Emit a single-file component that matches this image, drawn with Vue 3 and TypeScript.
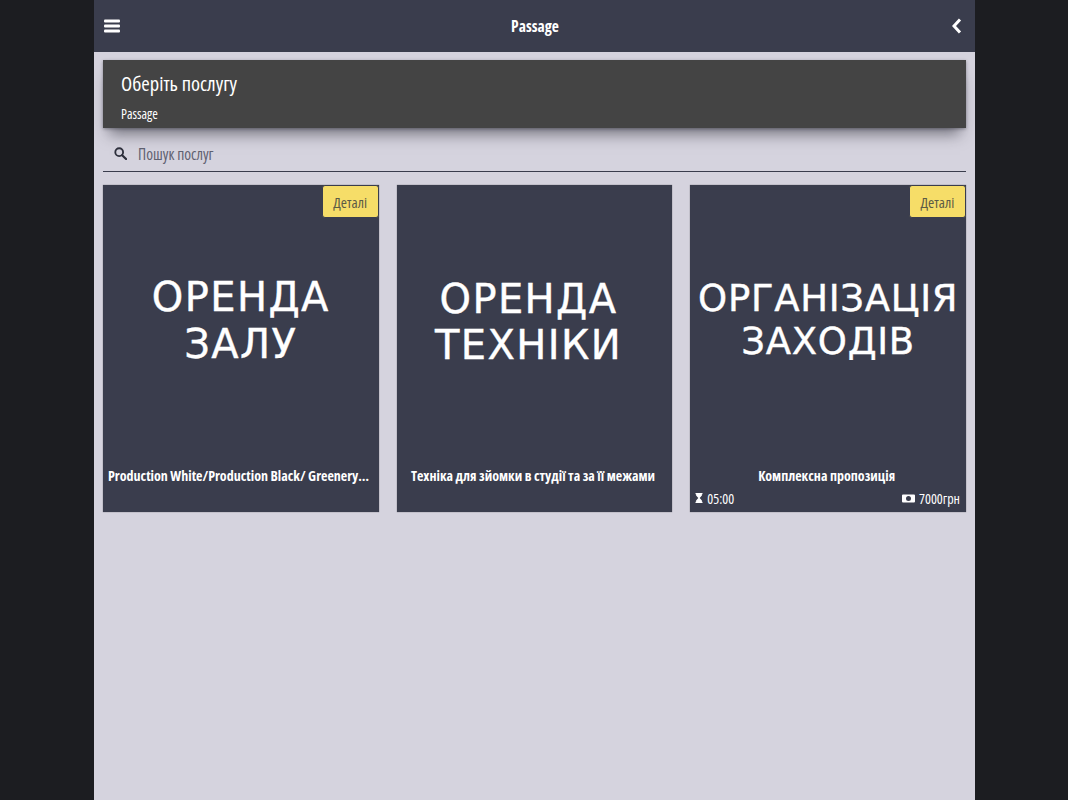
<script setup lang="ts">
interface Service {
  lines: string[]
  title: string
  cover: string
  details: boolean
  duration?: string
  price?: string
}

const services: Service[] = [
  { lines: ["ОРЕНДА", "ЗАЛУ"], title: "Production White/Production Black/ Greenery Studio", cover: "hall", details: true },
  { lines: ["ОРЕНДА", "ТЕХНІКИ"], title: "Техніка для зйомки в студії та за її межами", cover: "tech", details: false },
  { lines: ["ОРГАНІЗАЦІЯ", "ЗАХОДІВ"], title: "Комплексна пропозиція", cover: "events", details: true, duration: "05:00", price: "7000грн" },
]
</script>

<template>
  <div class="page">
    <div class="shell">
      <header class="topbar">
        <svg class="menu" viewBox="0 0 16 14" width="16" height="14">
          <rect x="0" y="0.5" width="16" height="3" rx="1" />
          <rect x="0" y="5.5" width="16" height="3" rx="1" />
          <rect x="0" y="10.5" width="16" height="3" rx="1" />
        </svg>
        <span class="brand">Passage</span>
        <svg class="back" viewBox="0 0 10 16" width="10" height="16">
          <path d="M8 1.5 2 8l6 6.5" fill="none" stroke="#fff" stroke-width="3" />
        </svg>
      </header>

      <main class="content">
        <section class="banner">
          <h1>Оберіть послугу</h1>
          <p>Passage</p>
        </section>

        <div class="search">
          <svg viewBox="0 0 14 14" width="13" height="13">
            <circle cx="5.6" cy="5.6" r="4.2" fill="none" stroke="#2d2f3c" stroke-width="2" />
            <path d="M8.8 8.8 13 13" stroke="#2d2f3c" stroke-width="2.4" stroke-linecap="round" />
          </svg>
          <span>Пошук послуг</span>
        </div>

        <div class="grid">
          <article v-for="item in services" :key="item.title" class="card">
            <button v-if="item.details" class="details">Деталі</button>
            <div class="cover" :class="item.cover">
              <span v-for="line in item.lines" :key="line">{{ line }}</span>
            </div>
            <div class="title">{{ item.title }}</div>
            <div class="meta">
              <span v-if="item.duration" class="meta-item">
                <svg viewBox="0 0 8 10" width="8" height="10">
                  <path d="M0.5 0h7v1.2h-.6v1.3L4.7 5l2.2 2.5v1.3h.6V10h-7V8.8h.6V7.5L3.3 5 1.1 2.5V1.2h-.6z" fill="#fff" />
                </svg>
                {{ item.duration }}
              </span>
              <span v-if="item.price" class="meta-item">
                <svg viewBox="0 0 13 9" width="13" height="9">
                  <path fill-rule="evenodd" d="M1 .5h11a1 1 0 0 1 1 1v6a1 1 0 0 1-1 1H1a1 1 0 0 1-1-1v-6a1 1 0 0 1 1-1zM6.5 2a2.5 2.5 0 1 0 0 5 2.5 2.5 0 0 0 0-5z" fill="#fff" />
                </svg>
                {{ item.price }}
              </span>
            </div>
          </article>
        </div>
      </main>
    </div>
  </div>
</template>

<style>
html,
body {
  background: #1c1d21;
}
</style>

<style scoped>
.page {
  min-height: 800px;
  padding-left: 1px;
  background: #1c1d21;
  display: flex;
  justify-content: center;
  font-family: "Open Sans", "Liberation Sans", sans-serif;
  font-stretch: 75%;
}

.shell {
  width: 881px;
  height: 800px;
  background: #d5d3de;
  overflow: hidden;
}

.topbar {
  height: 52px;
  background: #3a3d4d;
  padding: 0 13px 0 10px;
  display: flex;
  align-items: center;
  justify-content: space-between;
  color: #fff;
}

.menu {
  fill: #fff;
}

.brand {
  font-size: 15.5px;
  font-weight: 700;
  margin-left: -2px;
}

.content {
  padding: 8px 9px;
}

.banner {
  height: 68px;
  background: #444444;
  color: #fff;
  padding: 0 18px;
  box-shadow: 0 12px 14px -6px rgba(35, 35, 45, 0.55), 0 1px 3px rgba(35, 35, 45, 0.4);
}

.banner h1 {
  margin: 0;
  padding-top: 10px;
  font-size: 20.5px;
  line-height: 26px;
  font-weight: 500;
}

.banner p {
  margin: 10px 0 0;
  font-size: 13.5px;
  line-height: 16px;
  font-weight: 500;
}

.search {
  margin-top: 7px;
  height: 36px;
  border-bottom: 1px solid #3a3d4d;
  padding-left: 11px;
  display: flex;
  align-items: center;
  gap: 11px;
  color: #5f6170;
  font-size: 15.5px;
}

.search span {
  padding-top: 1px;
}

.grid {
  margin-top: 13px;
  display: grid;
  grid-template-columns: repeat(3, minmax(0, 1fr));
  gap: 18px;
}

.card {
  position: relative;
  height: 327px;
  background: #3a3d4d;
  color: #fff;
  box-shadow: 0 0 1px rgba(0, 0, 0, 0.5);
  display: flex;
  flex-direction: column;
}

.details {
  position: absolute;
  top: 0;
  right: 0;
  width: 57px;
  height: 33px;
  padding: 0;
  border: 1px solid #3a3d4d;
  border-radius: 3px;
  background: #f6dd68;
  color: #5c5b46;
  font-family: inherit;
  font-stretch: inherit;
  font-size: 15px;
}

.cover {
  height: 281px;
  box-sizing: border-box;
  display: flex;
  flex-direction: column;
  align-items: center;
  font-family: "DejaVu Sans", "Liberation Sans", sans-serif;
  font-stretch: 100%;
  -webkit-text-stroke: 0.4px #fff;
}

.hall,
.tech {
  padding-top: 89px;
  font-size: 40px;
  line-height: 47px;
  letter-spacing: 1.4px;
}

.tech {
  padding-top: 91px;
  line-height: 46px;
  padding-right: 12px;
}

.events {
  padding-top: 92px;
  font-size: 37px;
  line-height: 43px;
  letter-spacing: 0.7px;
}

.title {
  padding: 0 8px 0 5px;
  text-align: center;
  font-size: 14px;
  font-weight: 700;
  line-height: 20px;
  white-space: nowrap;
  overflow: hidden;
  text-overflow: ellipsis;
}

.meta {
  margin-top: 2px;
  padding: 0 6px 0 5px;
  height: 20px;
  display: flex;
  align-items: center;
  justify-content: space-between;
  font-size: 14px;
}

.meta-item {
  display: flex;
  align-items: center;
  gap: 4px;
}
</style>
